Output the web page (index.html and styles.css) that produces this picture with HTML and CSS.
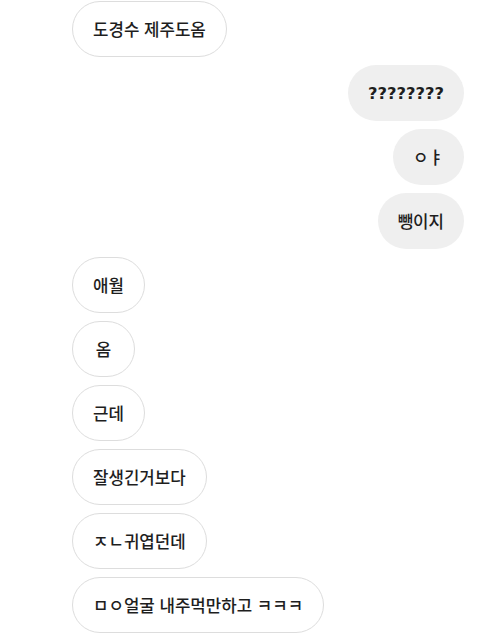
FILE: index.html
```html
<!DOCTYPE html>
<html lang="ko">

<head>
    <meta charset="UTF-8">
    <meta name="viewport" content="width=device-width, initial-scale=1.0">
    <title>채팅</title>
    <link rel="stylesheet" href="styles.css">
</head>

<body>
    <div class="chat">
        <div class="msg in"><span class="bubble">도경수 제주도옴</span></div>
        <div class="msg out"><span class="bubble latin">????????</span></div>
        <div class="msg out"><span class="bubble">ㅇㅑ</span></div>
        <div class="msg out"><span class="bubble">뺑이지</span></div>
        <div class="msg in"><span class="bubble">애월</span></div>
        <div class="msg in"><span class="bubble">옴</span></div>
        <div class="msg in"><span class="bubble">근데</span></div>
        <div class="msg in"><span class="bubble">잘생긴거보다</span></div>
        <div class="msg in"><span class="bubble">ㅈㄴ귀엽던데</span></div>
        <div class="msg in"><span class="bubble">ㅁㅇ얼굴 내주먹만하고 ㅋㅋㅋ</span></div>
    </div>
</body>

</html>
```

FILE: styles.css
```css
body {
    margin: 0;
    padding: 0;
    background-color: #fff;
    font-family: "Noto Sans CJK KR", "Noto Sans", sans-serif;
    color: #1e1e1e;
}

.chat {
    display: flex;
    flex-direction: column;
    gap: 8px;
    padding: 1px 16px 0 72px;
}

.msg {
    display: flex;
}

.msg.out {
    justify-content: flex-end;
}

.bubble {
    display: flex;
    align-items: center;
    justify-content: center;
    min-width: 63px;
    height: 56px;
    box-sizing: border-box;
    padding: 0 20px;
    border-radius: 28px;
    font-size: 16.8px;
    font-weight: 500;
    white-space: nowrap;
}

.bubble.latin {
    font-family: "DejaVu Sans", sans-serif;
    font-weight: 700;
    font-size: 16.4px;
}

.in .bubble {
    background-color: #fff;
    border: 1px solid #ddd;
}

.out .bubble {
    background-color: #efefef;
}
```
